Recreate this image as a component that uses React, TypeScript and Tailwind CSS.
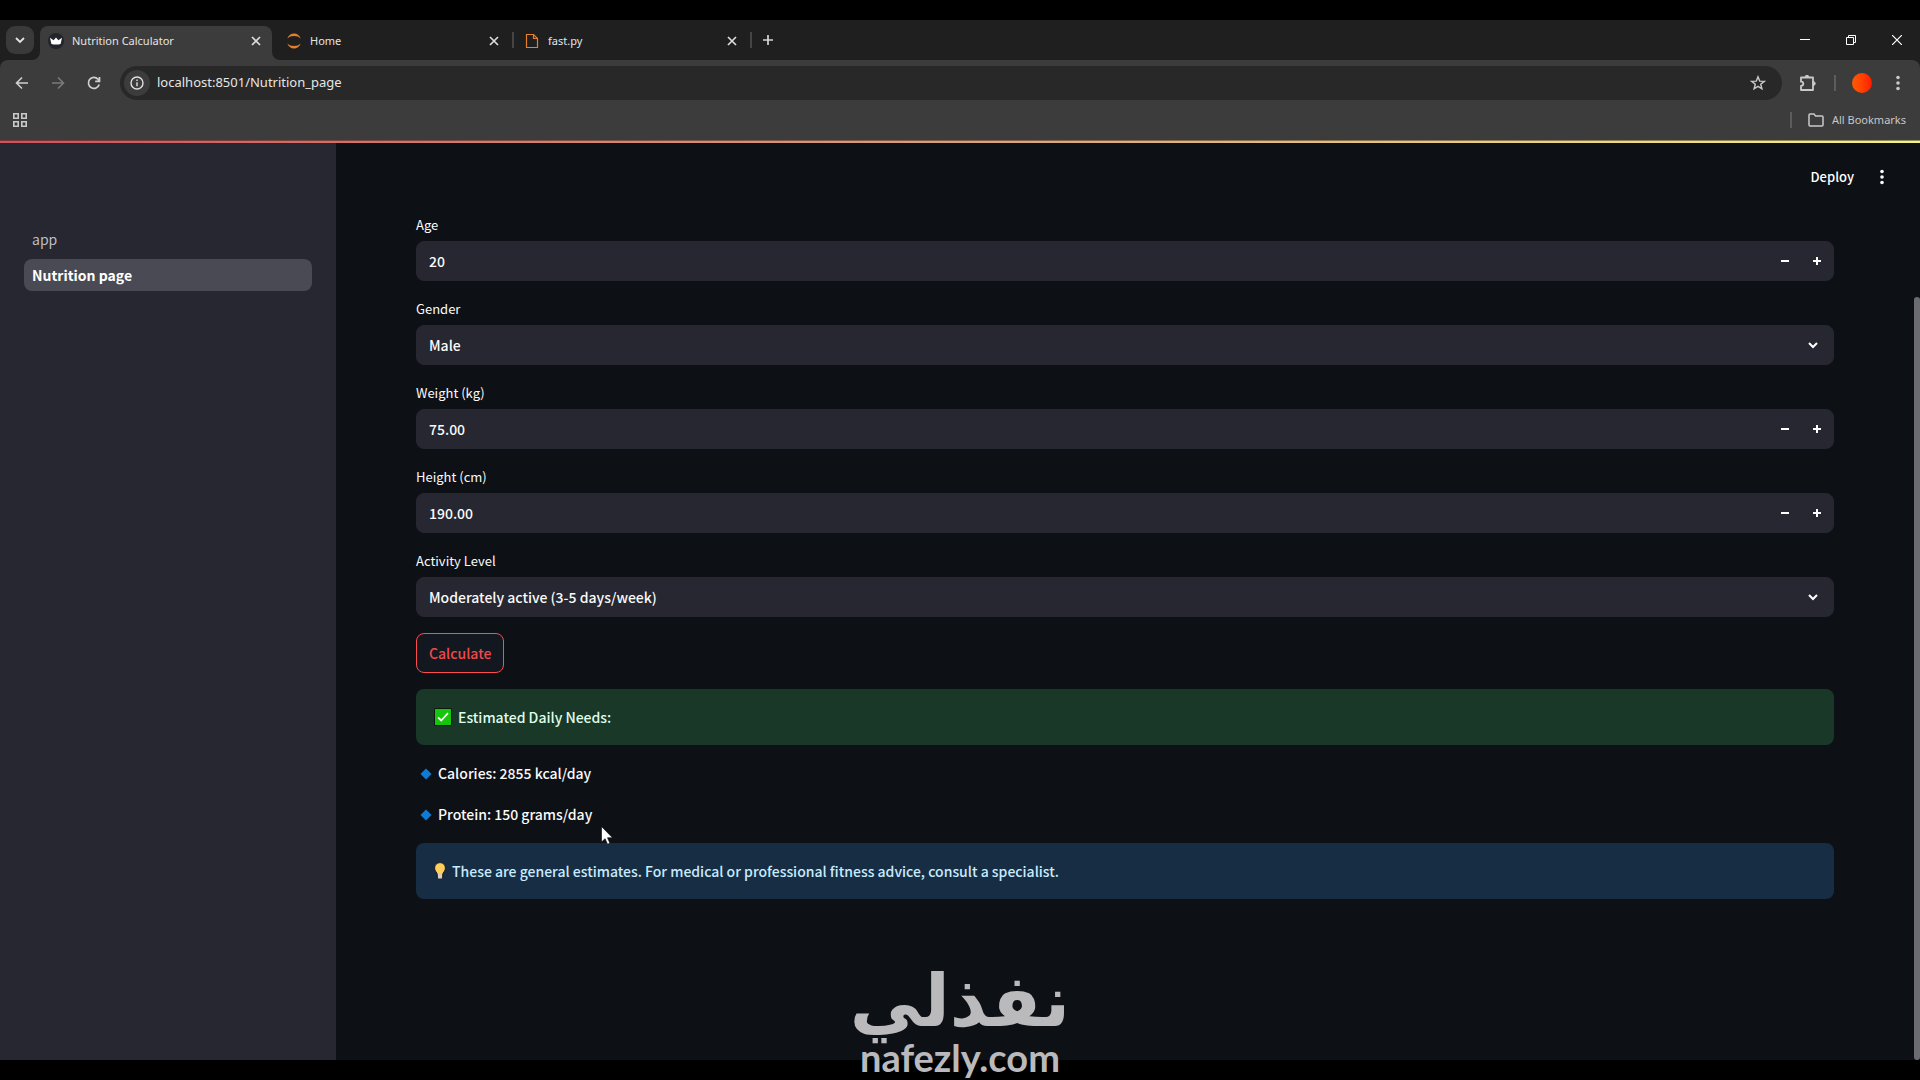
import React from "react";

const chromeFont = "font-['Noto_Sans','Open_Sans',sans-serif]";
const appFont = "font-['Noto_Sans_CJK_SC','Noto_Sans',sans-serif]";

const CloseIcon: React.FC = () => (
  <svg width="10" height="10" viewBox="0 0 10 10" stroke="#dcdcdc" strokeWidth="1.7" fill="none">
    <path d="M1 1l8 8M9 1l-8 8" />
  </svg>
);

const Kebab: React.FC<{ color: string }> = ({ color }) => (
  <svg width="4" height="16" viewBox="0 0 4 16" fill={color}>
    <circle cx="2" cy="2.5" r="1.8" />
    <circle cx="2" cy="8" r="1.8" />
    <circle cx="2" cy="13.5" r="1.8" />
  </svg>
);

const CrownIcon: React.FC = () => (
  <svg width="16" height="16" viewBox="0 0 16 16">
    <circle cx="8" cy="8" r="8" fill="#23242c" />
    <path d="M2 4.8l3.6 2.500L8 4.600l2.400 2.700L14 4.800 12.600 11c-3 .8-6.200.8-9.200 0z" fill="#fff" />
  </svg>
);

const JupyterIcon: React.FC = () => (
  <svg width="16" height="16" viewBox="0 0 16 16" fill="#e0812f">
    <path d="M1.3 5.4C2.6 2.2 5.1.4 8 .4s5.4 1.8 6.7 5C13 3.7 10.7 2.9 8 2.9S3 3.7 1.3 5.4z" />
    <path d="M1.3 10.6c1.3 3.2 3.8 5 6.7 5s5.4-1.8 6.7-5c-1.7 1.7-4 2.5-6.7 2.5s-5-.8-6.7-2.5z" />
  </svg>
);

const FileIcon: React.FC = () => (
  <svg width="16" height="16" viewBox="0 0 16 16" fill="none" stroke="#e8802b" strokeWidth="1.2">
    <path d="M2.500 1.500h7l4 4v9h-11z" />
    <path d="M9.500 1.500v4h4" />
  </svg>
);

type TabProps = { title: string; icon: React.ReactNode; active?: boolean };

const BrowserTab: React.FC<TabProps> = ({ title, icon, active }) => (
  <div
    className={
      active
        ? "relative flex items-center w-[232px] h-[34px] px-2 pb-1 rounded-t-lg bg-[#3c3c3c]"
        : "relative flex items-center w-[232px] h-[34px] px-2 pb-1"
    }
  >
    {active ? (
      <>
        <svg className="absolute -left-2 bottom-0" width="8" height="8" fill="#3c3c3c">
          <path d="M8 0v8H0a8 8 0 0 0 8-8z" />
        </svg>
        <svg className="absolute -right-2 bottom-0" width="8" height="8" fill="#3c3c3c">
          <path d="M0 0v8h8a8 8 0 0 1-8-8z" />
        </svg>
      </>
    ) : (
      <span className="absolute -right-1 top-1.5 w-0.5 h-4 bg-[#454545]"></span>
    )}
    {icon}
    <span className="flex-1 pl-2 text-[11px] leading-4 text-[#e4e4e4]">{title}</span>
    <button aria-label={"Close " + title} className="w-4 h-4 flex items-center justify-center">
      <CloseIcon />
    </button>
  </div>
);

const TabStrip: React.FC = () => (
  <div className="flex items-end h-10 bg-[#1f1f1f]">
    <div className="flex items-center h-[34px] pl-1.5 pb-1.5">
      <button aria-label="Search tabs" className="w-7 h-7 rounded-[9px] bg-[#3a3a3a] flex items-center justify-center">
        <svg width="10" height="7" viewBox="0 0 10 7" fill="none" stroke="#e3e3e3" strokeWidth="1.8">
          <path d="M1 1l4 4 4-4" />
        </svg>
      </button>
    </div>
    <div className="flex gap-1.5 pl-1.5">
      <BrowserTab title="Nutrition Calculator" icon={<CrownIcon />} active />
      <BrowserTab title="Home" icon={<JupyterIcon />} />
      <BrowserTab title="fast.py" icon={<FileIcon />} />
    </div>
    <button aria-label="New tab" className="w-7 h-7 mb-1.5 ml-1.5 flex items-center justify-center">
      <svg width="12" height="12" viewBox="0 0 12 12" stroke="#d5d5d5" strokeWidth="1.7">
        <path d="M6 1v10M1 6h10" />
      </svg>
    </button>
    <div className="ml-auto flex h-10">
      <button aria-label="Minimize" className="w-[46px] flex items-center justify-center">
        <svg width="10" height="10" viewBox="0 0 10 10" stroke="#fff">
          <path d="M0 4.500h10" />
        </svg>
      </button>
      <button aria-label="Restore" className="w-[46px] flex items-center justify-center">
        <svg width="10" height="10" viewBox="0 0 10 10" stroke="#fff" fill="none">
          <path d="M.5 2.500h7v7h-7zM2.500 2.500v-2h7v7h-2" />
        </svg>
      </button>
      <button aria-label="Close window" className="w-[46px] flex items-center justify-center">
        <svg width="10" height="10" viewBox="0 0 10 10" stroke="#fff" strokeWidth="1.2">
          <path d="M0 0l10 10M10 0L0 10" />
        </svg>
      </button>
    </div>
  </div>
);

const Toolbar: React.FC = () => (
  <div className="bg-[#1f1f1f]">
    <div className="rounded-t-lg bg-[#3c3c3c]">
      <div className="flex items-center pt-1.5 px-1">
        <button aria-label="Back" className="w-9 h-[34px] flex items-center justify-center">
          <svg width="14" height="14" viewBox="0 0 14 14" fill="none" stroke="#d0d0d0" strokeWidth="1.6">
            <path d="M13 7H1.500M7 1.500L1.500 7 7 12.500" />
          </svg>
        </button>
        <button aria-label="Forward" className="w-9 h-[34px] flex items-center justify-center">
          <svg width="14" height="14" viewBox="0 0 14 14" fill="none" stroke="#7a7a7a" strokeWidth="1.6">
            <path d="M1 7h11.500M7 1.500L12.500 7 7 12.500" />
          </svg>
        </button>
        <button aria-label="Reload" className="w-9 h-[34px] flex items-center justify-center">
          <svg width="14" height="14" viewBox="0 0 14 14" fill="none" stroke="#d0d0d0" strokeWidth="1.7">
            <path d="M12.200 8.500A5.500 5.500 0 1 1 11 3.200L12.500 5M12.500 1v4.300H8.200" />
          </svg>
        </button>
        <div className="flex-1 ml-2 flex items-center h-[34px] rounded-full bg-[#282828] px-1">
          <button aria-label="Site information" className="w-[26px] h-[26px] rounded-full bg-[#3c3c3c] flex items-center justify-center">
            <svg width="14" height="14" viewBox="0 0 14 14" fill="none" stroke="#e0e0e0" strokeWidth="1.4">
              <circle cx="7" cy="7" r="6" />
              <path d="M7 6.200v4M7 3.500v1.500" />
            </svg>
          </button>
          <input
            aria-label="Address"
            defaultValue="localhost:8501/Nutrition_page"
            className="flex-1 min-w-0 px-[7px] bg-transparent text-[13px] text-[#e6e6e6] outline-none"
          />
          <button aria-label="Bookmark this page" className="w-9 h-[34px] mr-0.5 flex items-center justify-center">
            <svg width="16" height="16" viewBox="0 0 16 16" fill="none" stroke="#c9c9c9" strokeWidth="1.4">
              <path d="M8 1.800l1.700 4.300 4.600.3-3.600 2.900 1.200 4.500L8 11.300l-3.900 2.500 1.200-4.500L1.700 6.400l4.600-.3z" />
            </svg>
          </button>
        </div>
        <button aria-label="Extensions" className="w-9 h-[34px] ml-2 flex items-center justify-center">
          <svg width="18" height="18" viewBox="0 0 18 18" fill="none" stroke="#c9c9c9" strokeWidth="1.8">
            <path d="M2 3.500H14V16H2v-4.200c1.500 0 2.300-.9 2.300-2S3.500 7.700 2 7.700z" strokeLinejoin="round" />
            <path d="M6 3.500a2 2.200 0 0 1 4 0zM14 7.500a2.200 2 0 0 1 0 4z" fill="#c9c9c9" strokeWidth="1" />
          </svg>
        </button>
        <span className="w-0.5 h-4 ml-2 bg-[#5c5c5c]"></span>
        <button aria-label="Profile" className="w-5 h-5 ml-4 rounded-full bg-linear-to-r from-[#ff5a00] to-[#ff1400]"></button>
        <button aria-label="Browser menu" className="w-9 h-[34px] ml-2 flex items-center justify-center">
          <Kebab color="#c9c9c9" />
        </button>
      </div>
      <div className="flex items-center h-10 pl-3 pr-[14px]">
        <button aria-label="Apps" className="w-4 h-4 flex items-center justify-center">
          <svg width="14" height="14" viewBox="0 0 14 14" fill="none" stroke="#c9c9c9" strokeWidth="1.6">
            <path d="M.8.8h4.400v4.400H.8zM8.800.8h4.400v4.400H8.800zM.8 8.800h4.400v4.400H.8zM8.800 8.800h4.400v4.400H8.800z" />
          </svg>
        </button>
        <span className="ml-auto w-0.5 h-4 mr-4 bg-[#5c5c5c]"></span>
        <button className="flex items-center gap-2 text-[11px] leading-4 text-[#c7c7c7]">
          <svg width="16" height="14" viewBox="0 0 16 14" fill="none" stroke="#c9c9c9" strokeWidth="1.5">
            <path d="M1 12V2q0-1 1-1h4l1.600 2H14q1 0 1 1v8q0 1-1 1H2q-1 0-1-1z" />
          </svg>
          All Bookmarks
        </button>
      </div>
    </div>
  </div>
);

const Sidebar: React.FC = () => (
  <aside className="w-[336px] shrink-0 bg-[#262730] px-6 pt-20">
    <nav className="flex flex-col gap-1">
      <a href="#app" className="flex items-center h-8 px-2 rounded-lg text-[14px] text-[#bdbec2]">
        app
      </a>
      <a href="#nutrition" className="flex items-center h-8 px-2 rounded-lg bg-[#494a53] text-[14px] font-bold text-white">
        Nutrition page
      </a>
    </nav>
  </aside>
);

const NumberField: React.FC<{ id: string; label: string; value: string }> = ({ id, label, value }) => (
  <div className="flex flex-col gap-1">
    <label htmlFor={id} className="text-[13px] leading-6 text-[#fafafa]">
      {label}
    </label>
    <div className="flex h-10 rounded-lg border border-[#262730] bg-[#262730] overflow-hidden">
      <input
        id={id}
        inputMode="decimal"
        defaultValue={value}
        className="flex-1 min-w-0 px-3 bg-transparent text-[14px] font-medium text-[#fafafa] outline-none"
      />
      <button aria-label={"Decrease " + label} className="w-8 flex items-center justify-center">
        <svg width="8" height="8" fill="#fff">
          <path d="M0 3h8v2H0z" />
        </svg>
      </button>
      <button aria-label={"Increase " + label} className="w-8 flex items-center justify-center">
        <svg width="8" height="8" fill="#fff">
          <path d="M0 3h3V0h2v3h3v2H5v3H3V5H0z" />
        </svg>
      </button>
    </div>
  </div>
);

const SelectField: React.FC<{ id: string; label: string; value: string; options: string[] }> = ({
  id,
  label,
  value,
  options,
}) => (
  <div className="flex flex-col gap-1">
    <label htmlFor={id} className="text-[13px] leading-6 text-[#fafafa]">
      {label}
    </label>
    <div className="relative">
      <select
        id={id}
        defaultValue={value}
        className="block w-full h-10 px-3 rounded-lg border border-[#262730] bg-[#262730] text-[14px] font-medium text-[#fafafa] appearance-none outline-none"
      >
        {options.map((option) => (
          <option key={option}>{option}</option>
        ))}
      </select>
      <svg
        className="absolute right-4 top-4 pointer-events-none"
        width="10"
        height="8"
        viewBox="0 0 10 8"
        fill="none"
        stroke="#fff"
        strokeWidth="2"
      >
        <path d="M1 2l4 4 4-4" />
      </svg>
    </div>
  </div>
);

const Diamond: React.FC = () => (
  <svg width="12" height="12" viewBox="0 0 12 12" fill="#0f7ad8">
    <path d="M6 .5L11.500 6 6 11.500.5 6z" />
  </svg>
);

const Calculator: React.FC = () => (
  <div className="flex flex-col gap-4 px-20 pt-2.5 pb-10">
    <NumberField id="age" label="Age" value="20" />
    <SelectField id="gender" label="Gender" value="Male" options={["Male", "Female"]} />
    <NumberField id="weight" label="Weight (kg)" value="75.00" />
    <NumberField id="height" label="Height (cm)" value="190.00" />
    <SelectField
      id="activity"
      label="Activity Level"
      value="Moderately active (3-5 days/week)"
      options={[
        "Sedentary (little or no exercise)",
        "Lightly active (1-3 days/week)",
        "Moderately active (3-5 days/week)",
        "Very active (6-7 days/week)",
      ]}
    />
    <button className="self-start h-10 px-3 rounded-lg border border-[#ff4b4b] bg-[#131720] text-[14px] font-medium text-[#ee4a4b]">
      Calculate
    </button>
    <div className="flex items-center gap-1.5 h-14 px-[18px] rounded-lg bg-[#1a3828] text-[14px] font-medium text-[#dffde9]">
      <svg width="18" height="18" viewBox="0 0 18 18">
        <path d="M.5.5h17v17H.5z" fill="#16c60c" stroke="#0b1a10" />
        <path d="M4 9.300l3.200 3.200L14 5.200" fill="none" stroke="#f4fff2" strokeWidth="1.800" />
      </svg>
      Estimated Daily Needs:
    </div>
    <p className="flex items-center gap-1.5 pl-1 text-[14px] font-medium leading-[25px] text-[#fafafa]">
      <Diamond />
      Calories: 2855 kcal/day
    </p>
    <p className="flex items-center gap-1.5 pl-1 text-[14px] font-medium leading-[25px] text-[#fafafa]">
      <Diamond />
      Protein: 150 grams/day
    </p>
    <div className="flex items-center gap-1.5 h-14 px-[18px] rounded-lg bg-[#172d43] text-[14px] font-medium text-[#c7ebff]">
      <svg width="12" height="18" viewBox="0 0 12 18">
        <path
          d="M6 .6C2.900.6.6 2.900.6 5.900c0 2.300 1.200 3.600 2.200 5.200.4.700.5 1.300.5 2v3.200h5.400v-3.200c0-.7.1-1.300.5-2 1-1.600 2.200-2.900 2.200-5.200C11.400 2.900 9.100.6 6 .6z"
          fill="#ffcf5c"
          stroke="#16191f"
        />
        <path d="M4 12h4v4.500H4z" fill="#d5cfc9" />
      </svg>
      These are general estimates. For medical or professional fitness advice, consult a specialist.
    </div>
  </div>
);

const Watermark: React.FC = () => (
  <div className="absolute inset-x-0 bottom-0 flex flex-col items-center text-[#bababc] pointer-events-none">
    <span dir="rtl" className="font-['DejaVu_Sans',sans-serif] font-bold text-[72px] leading-[66px]">
      نفذلي
    </span>
    <span className="font-['Lato',sans-serif] font-bold text-[38px] leading-[46px]">nafezly.com</span>
  </div>
);

export const App: React.FC = () => {
  return (
    <div className={"relative min-h-screen flex flex-col py-5 bg-black overflow-hidden " + chromeFont}>
      <TabStrip />
      <Toolbar />
      <div className="h-[3px] bg-linear-to-r from-[#cc545c] via-[#d8a07c] to-[#f4f08c] border-t border-black/40"></div>
      <div className={"flex-1 flex bg-[#0d1015] " + appFont}>
        <Sidebar />
        <main className="flex-1 min-w-0">
          <header className="flex items-center justify-end gap-[22px] h-[60px] pt-2 pr-[26px]">
            <button className="text-[13px] font-medium text-white">Deploy</button>
            <button aria-label="App menu" className="w-3 flex justify-center">
              <Kebab color="#fafafa" />
            </button>
          </header>
          <Calculator />
        </main>
        <div className="w-1.5 shrink-0 flex flex-col pt-[154px]">
          <div className="flex-1 rounded-full bg-[#6b6c72]"></div>
        </div>
      </div>
      <Watermark />
      <svg className="absolute left-[601px] top-[826px]" width="12" height="19" viewBox="0 0 12 19">
        <path d="M.5.5v15.500l3.600-3.300 2.400 5.500 2.400-1-2.400-5.400h5z" fill="#fff" stroke="#000" strokeWidth=".6" />
      </svg>
    </div>
  );
};

export default App;
